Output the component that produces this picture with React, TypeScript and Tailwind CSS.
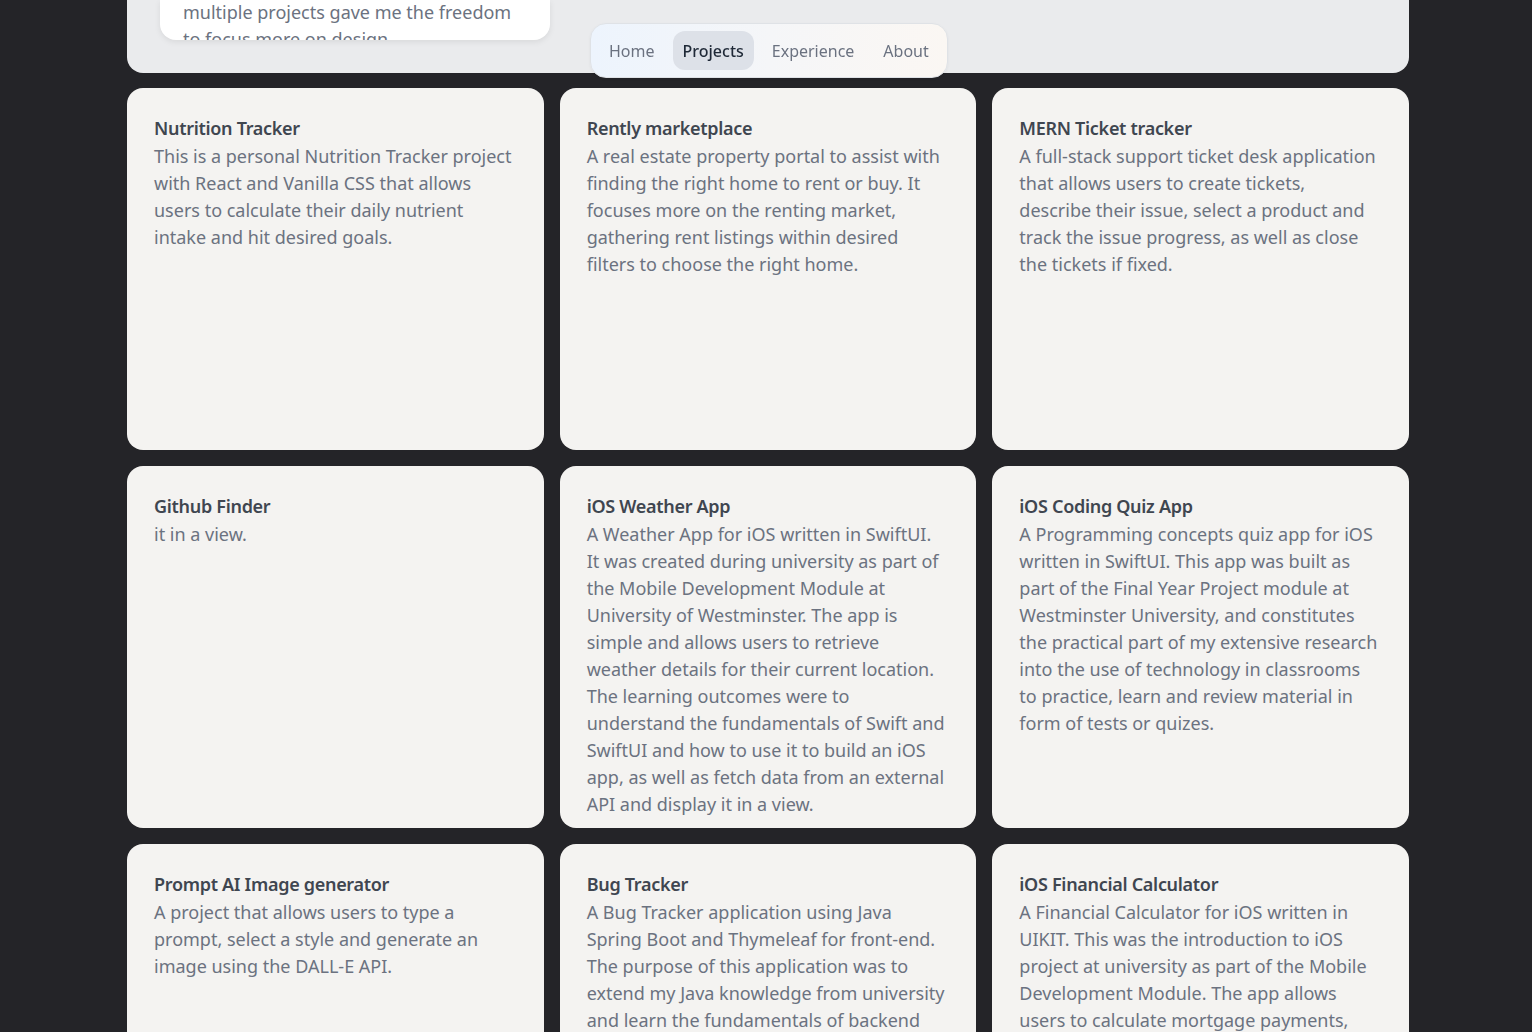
import React from "react";

const projects = [
  {
    title: "Nutrition Tracker",
    body: "This is a personal Nutrition Tracker project with React and Vanilla CSS that allows users to calculate their daily nutrient intake and hit desired goals.",
  },
  {
    title: "Rently marketplace",
    body: "A real estate property portal to assist with finding the right home to rent or buy. It focuses more on the renting market, gathering rent listings within desired filters to choose the right home.",
  },
  {
    title: "MERN Ticket tracker",
    body: "A full-stack support ticket desk application that allows users to create tickets, describe their issue, select a product and track the issue progress, as well as close the tickets if fixed.",
  },
  {
    title: "Github Finder",
    body: "it in a view.",
  },
  {
    title: "iOS Weather App",
    body: "A Weather App for iOS written in SwiftUI. It was created during university as part of the Mobile Development Module at University of Westminster. The app is simple and allows users to retrieve weather details for their current location. The learning outcomes were to understand the fundamentals of Swift and SwiftUI and how to use it to build an iOS app, as well as fetch data from an external API and display it in a view.",
  },
  {
    title: "iOS Coding Quiz App",
    body: "A Programming concepts quiz app for iOS written in SwiftUI. This app was built as part of the Final Year Project module at Westminster University, and constitutes the practical part of my extensive research into the use of technology in classrooms to practice, learn and review material in form of tests or quizes.",
  },
  {
    title: "Prompt AI Image generator",
    body: "A project that allows users to type a prompt, select a style and generate an image using the DALL-E API.",
  },
  {
    title: "Bug Tracker",
    body: "A Bug Tracker application using Java Spring Boot and Thymeleaf for front-end. The purpose of this application was to extend my Java knowledge from university and learn the fundamentals of backend development with Spring Boot.",
  },
  {
    title: "iOS Financial Calculator",
    body: "A Financial Calculator for iOS written in UIKIT. This was the introduction to iOS project at university as part of the Mobile Development Module. The app allows users to calculate mortgage payments, loans, savings and compound interest.",
  },
];

const font = { fontFamily: '"Noto Sans", "Open Sans", sans-serif' };

export default function App() {
  return (
    <div className="min-h-screen bg-[#242428]" style={font}>
      <div className="w-[1282px] ml-[127px] pb-10">
        <div className="h-[73px] bg-[#eaebed] rounded-b-2xl pl-[33px]">
          <div className="w-[390px] h-[40px] bg-white rounded-b-2xl shadow-[0_2px_6px_rgba(0,0,0,0.08)] overflow-hidden pl-[23px]">
            <p className="text-[18px] leading-[27px] text-[#6b7280] -mt-[1px]">
              multiple projects gave me the freedom
              <br />
              to focus more on design
            </p>
          </div>
        </div>
        <div className="grid grid-cols-3 gap-4 mt-[15px]">
          {projects.map((p) => (
            <div
              key={p.title}
              className="h-[362px] bg-[#f4f3f1] rounded-2xl pl-[27px] pr-[30px] pt-[26px] overflow-hidden"
            >
              <h3 className="text-[18px] leading-[29px] font-semibold text-[#3f4650] tracking-[-0.3px]">
                {p.title}
              </h3>
              <p className="text-[18px] leading-[27px] text-[#6b7280]">{p.body}</p>
            </div>
          ))}
        </div>
      </div>

      <nav className="fixed top-[23px] left-[590px] flex items-center gap-[7px] p-[7px] rounded-2xl border border-[#dfe2e6] bg-gradient-to-r from-[#edf4fd] via-[#f5f6f8] to-[#fbf7f3] shadow-[0_1px_3px_rgba(0,0,0,0.05)]">
        {["Home", "Projects", "Experience", "About"].map((n) => (
          <span
            key={n}
            className={
              "h-[39px] flex items-center rounded-xl text-[16px] " +
              (n === "Projects"
                ? "px-[10px] bg-[#dde1e8] text-[#1f2937] font-medium"
                : "px-[11px] text-[#6b7280]")
            }
          >
            {n}
          </span>
        ))}
      </nav>
    </div>
  );
}
